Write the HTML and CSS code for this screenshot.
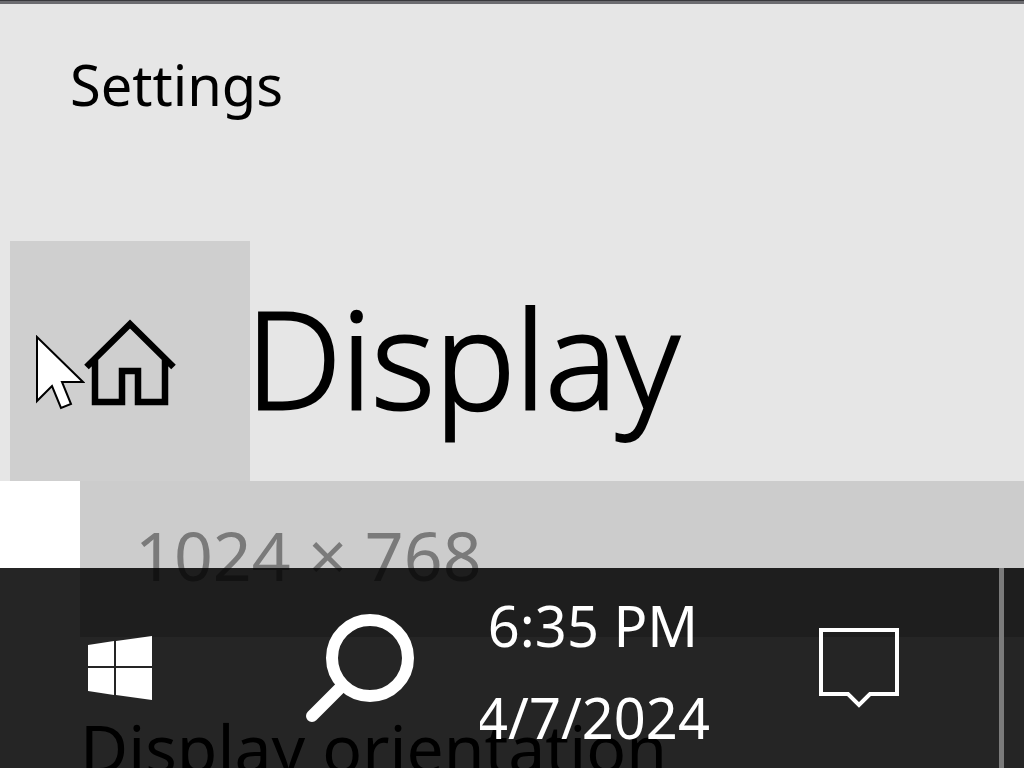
FILE: index.html
```html
<!DOCTYPE html>
<html lang="en">
<head>
<meta charset="utf-8">
<title>Settings</title>
<link rel="stylesheet" href="styles.css">
</head>
<body>
<div class="window">
  <header class="titlebar"><span class="app-name">Settings</span></header>
  <div class="page-header">
    <button class="home" type="button" aria-label="Home">
      <svg class="home-icon" viewBox="0 0 92 88" aria-hidden="true">
        <path d="M2.500 48 46 5 89.500 48M11 40V83H38V52H54V83H81V40" fill="none" stroke="#000" stroke-width="6.500"/>
      </svg>
    </button>
    <h1 class="page-title">Display</h1>
  </div>
  <main class="content">
    <select class="resolution" aria-label="Resolution" disabled>
      <option>1024 × 768</option>
    </select>
    <h2 class="field-title">Display orientation</h2>
  </main>
</div>
<nav class="taskbar" aria-label="Taskbar">
  <button class="task start" type="button" aria-label="Start">
    <svg class="start-icon" viewBox="0 0 64 64" aria-hidden="true">
      <path d="M0 9 26 5V30H0ZM28 5 64 0V30H28ZM0 32H26V59L0 55ZM28 32H64V64L28 59Z" fill="#fff"/>
    </svg>
  </button>
  <button class="task search" type="button" aria-label="Search">
    <svg class="search-icon" viewBox="0 0 108 108" aria-hidden="true">
      <circle cx="64" cy="44" r="38" fill="none" stroke="#fff" stroke-width="12"/>
      <path d="M6 102 35 73" stroke="#fff" stroke-width="12" stroke-linecap="round"/>
    </svg>
  </button>
  <button class="task clock" type="button">
    <span class="clock-line">6:35 PM</span>
    <span class="clock-line">4/7/2024</span>
  </button>
  <button class="task notifications" type="button" aria-label="Notifications">
    <svg class="note-icon" viewBox="0 0 80 80" aria-hidden="true">
      <path d="M2 2H78V66H51L40 77 29 66H2Z" fill="none" stroke="#fff" stroke-width="4"/>
    </svg>
  </button>
  <button class="show-desktop" type="button" aria-label="Show desktop"></button>
</nav>
<svg class="pointer" viewBox="0 0 50 76" aria-hidden="true">
  <path d="M2 2V66L17 51 26 73 36 69 27 47H48Z" fill="#fff" stroke="#000" stroke-width="2"/>
</svg>
</body>
</html>
```
FILE: styles.css
```css
* { box-sizing: border-box; }

body {
  margin: 0;
  height: 100vh;
  overflow: hidden;
  background: #fff;
  color: #000;
  font-family: "Segoe UI", "Noto Sans", "Open Sans", sans-serif;
}

button, select { font: inherit; border: 0; border-radius: 0; padding: 0; margin: 0; }

.window { border-top: 1px solid #38383c; }

.titlebar {
  height: 240px;
  padding: 40px 70px;
  border-top: 3px solid #6c6c70;
  background: #e6e6e6;
}

.app-name { display: block; font-size: 56px; line-height: 80px; }

.page-header {
  display: flex;
  height: 240px;
  padding-left: 10px;
  background: #e6e6e6;
}

.home {
  display: grid;
  place-items: center;
  width: 240px;
  padding-top: 4px;
  background: #cfcfcf;
}

.home-icon { width: 92px; height: 88px; }

.page-title {
  margin: 0 0 0 -4px;
  font-family: "Segoe UI Light", "Open Sans", "Noto Sans", sans-serif;
  font-size: 135px;
  font-weight: 300;
  line-height: 232px;
  -webkit-text-stroke: 3px #000;
}

.content { padding-left: 80px; }

.resolution {
  appearance: none;
  display: block;
  width: 100%;
  height: 156px;
  padding: 0 55px 10px;
  background: #ccc;
  color: #7a7a7a;
  opacity: 1;
  font-size: 68px;
}

.field-title { margin: 0; padding-top: 64px; font-size: 66px; font-weight: 400; line-height: 92px; white-space: nowrap; }

.taskbar {
  position: fixed;
  inset: auto 0 0;
  display: flex;
  height: 200px;
  background: rgba(0, 0, 0, 0.855);
}

.task {
  display: grid;
  place-items: center;
  width: 240px;
  background: none;
  color: #fff;
}

.start-icon { width: 64px; height: 64px; }
.search-icon { width: 108px; height: 108px; }

.clock {
  grid-template-columns: 100%;
  align-content: center;
  overflow: hidden;
  padding: 6px 14px 0 0;
  font-size: 56px;
  line-height: 92px;
}

.clock-line { white-space: nowrap; }

.notifications { flex: 1; padding-right: 2px; }
.note-icon { width: 80px; height: 80px; }

.show-desktop {
  width: 25px;
  border-left: 5px solid #7b7b7b;
  background: none;
}

.pointer { position: fixed; left: 35px; top: 335px; width: 50px; height: 76px; }
```
